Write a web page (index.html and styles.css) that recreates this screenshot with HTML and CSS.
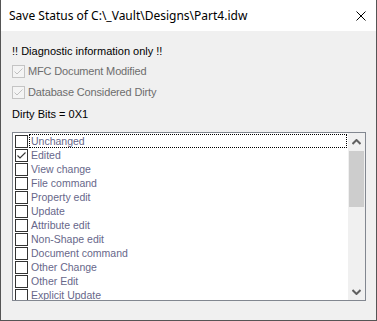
FILE: index.html
```html
<!DOCTYPE html>
<html>
<head>
<meta charset="utf-8">
<link rel="stylesheet" href="styles.css">
</head>
<body>
<div class="window">
  <div class="titlebar">
    <span class="title">Save Status of C:\_Vault\Designs\Part4.idw</span>
    <svg class="close" width="10" height="10" viewBox="0 0 10 10"><path d="M0.5 0.5 L9.5 9.5 M9.5 0.5 L0.5 9.5" stroke="#000" stroke-width="1" fill="none"/></svg>
  </div>
  <div class="content">
    <div class="line diag">!! Diagnostic information only !!</div>
    <div class="dis-row mfc"><span class="dis-box"><svg width="11" height="11" viewBox="0 0 11 11"><path d="M1.5 5.5 L4 8 L9.5 2.5" stroke="#c0c0c0" stroke-width="1" fill="none"/></svg></span><span class="dis-label">MFC Document Modified</span></div>
    <div class="dis-row db"><span class="dis-box"><svg width="11" height="11" viewBox="0 0 11 11"><path d="M1.5 5.5 L4 8 L9.5 2.5" stroke="#c0c0c0" stroke-width="1" fill="none"/></svg></span><span class="dis-label">Database Considered Dirty</span></div>
    <div class="line bits">Dirty Bits = 0X1</div>
    <div class="listbox">
      <div class="items">
        <div class="item"><span class="box"></span><span class="label focus">Unchanged</span></div>
        <div class="item"><span class="box"><svg width="11" height="11" viewBox="0 0 11 11"><path d="M1.5 5.5 L4 8 L9.5 2.5" stroke="#333" stroke-width="1.1" fill="none"/></svg></span><span class="label">Edited</span></div>
        <div class="item"><span class="box"></span><span class="label">View change</span></div>
        <div class="item"><span class="box"></span><span class="label">File command</span></div>
        <div class="item"><span class="box"></span><span class="label">Property edit</span></div>
        <div class="item"><span class="box"></span><span class="label">Update</span></div>
        <div class="item"><span class="box"></span><span class="label">Attribute edit</span></div>
        <div class="item"><span class="box"></span><span class="label">Non-Shape edit</span></div>
        <div class="item"><span class="box"></span><span class="label">Document command</span></div>
        <div class="item"><span class="box"></span><span class="label">Other Change</span></div>
        <div class="item"><span class="box"></span><span class="label">Other Edit</span></div>
        <div class="item"><span class="box"></span><span class="label">Explicit Update</span></div>
      </div>
      <div class="scrollbar">
        <div class="arrow"><svg width="9" height="6" viewBox="0 0 9 6"><path d="M0.5 5 L4.5 1 L8.5 5" stroke="#606060" stroke-width="2" fill="none"/></svg></div>
        <div class="thumb"></div>
        <div class="track"></div>
        <div class="arrow"><svg width="9" height="6" viewBox="0 0 9 6"><path d="M0.5 1 L4.5 5 L8.5 1" stroke="#606060" stroke-width="2" fill="none"/></svg></div>
      </div>
    </div>
  </div>
</div>
</body>
</html>
```
FILE: styles.css
```css
html, body {
  margin: 0;
  padding: 0;
}
body {
  width: 377px;
  height: 321px;
  overflow: hidden;
  font-family: "Liberation Sans", Arial, sans-serif;
  font-size: 11px;
  color: #000;
}
.window {
  box-sizing: border-box;
  width: 377px;
  height: 321px;
  background: #f0f0f0;
  border: 1px solid #555;
  border-top: none;
  display: flex;
  flex-direction: column;
}
.titlebar {
  height: 31px;
  background: #fff;
  display: flex;
  align-items: center;
  justify-content: space-between;
  padding: 0 10px 0 8px;
  flex-shrink: 0;
}
.title {
  font-family: "Noto Sans", sans-serif;
  font-size: 12px;
  color: #000;
  padding-bottom: 1px;
}
.close {
  display: block;
}
.content {
  padding-left: 11px;
  display: flex;
  flex-direction: column;
}
.line {
  height: 14px;
  line-height: 14px;
}
.diag { margin-top: 13px; }
.bits { margin-top: 8px; }
.dis-row {
  height: 14px;
  display: flex;
  align-items: center;
}
.mfc { margin-top: 6px; }
.db { margin-top: 7px; }
.dis-box {
  box-sizing: border-box;
  width: 13px;
  height: 13px;
  border: 1px solid #c4c4c4;
  background: #f4f4f4;
  display: flex;
  flex-shrink: 0;
}
.dis-label {
  margin-left: 3px;
  color: #6d6d6d;
  letter-spacing: -0.15px;
}
.listbox {
  box-sizing: border-box;
  margin-top: 11px;
  width: 354px;
  height: 169px;
  border: 1px solid #828790;
  background: #fff;
  display: flex;
}
.items {
  flex: 1;
  overflow: hidden;
  padding: 1px 1px 0 2px;
}
.item {
  height: 14px;
  display: flex;
}
.box {
  box-sizing: border-box;
  width: 13px;
  height: 13px;
  margin-top: 1px;
  border: 1px solid #333;
  background: #fff;
  display: flex;
  flex-shrink: 0;
}
.label {
  flex: 1;
  box-sizing: border-box;
  height: 14px;
  line-height: 12px;
  margin-left: 1px;
  padding-left: 1px;
  border: 1px dotted transparent;
  color: #67678a;
  font-size: 10.5px;
}
.label.focus {
  border-color: #000;
}
.scrollbar {
  width: 17px;
  background: #f0f0f0;
  display: flex;
  flex-direction: column;
  flex-shrink: 0;
}
.arrow {
  height: 17px;
  display: flex;
  align-items: center;
  justify-content: center;
}
.thumb {
  height: 56px;
  margin: 1px 1px 0;
  background: #cdcdcd;
}
.track {
  flex: 1;
}
```
